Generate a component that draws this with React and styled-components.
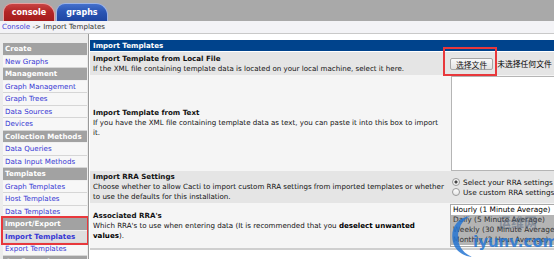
import React from 'react'
import styled, { createGlobalStyle } from 'styled-components'

const GlobalStyle = createGlobalStyle`
  html, body {
    margin: 0;
    padding: 0;
    background: #fff;
    overflow: hidden;
  }
  body {
    font-family: "DejaVu Sans", Verdana, "Noto Sans CJK SC", sans-serif;
    font-size: 7.1px;
    color: #000;
  }
`

const Page = styled.div`
  position: relative;
  width: 554px;
  height: 259px;
  overflow: hidden;
`

const TopBar = styled.div`
  height: 21px;
  background: #a9a9a9;
  display: flex;
  align-items: flex-end;
  padding-left: 3px;
  gap: 1px;
`

const Tab = styled.div`
  width: 52px;
  height: 18px;
  box-sizing: border-box;
  border-radius: 9px 12px 0 0;
  border: 1px solid ${p => (p.$red ? '#e7a0a0' : '#9db4e6')};
  border-bottom: none;
  background: ${p =>
    p.$red
      ? 'linear-gradient(#c84444, #b32626 45%, #a51d1d)'
      : 'linear-gradient(#4470cc, #2a55b4 45%, #1f46a2)'};
  color: #fff;
  font-weight: bold;
  font-size: 8px;
  display: flex;
  align-items: center;
  justify-content: center;
  padding-bottom: 1px;
`

const Crumbs = styled.div`
  height: 12px;
  line-height: 12px;
  background: #f3f3f6;
  border-bottom: 1px solid #c9c9c9;
  padding-left: 2px;
  color: #333;
  a {
    color: #3f3fd8;
    text-decoration: none;
  }
`

const Body = styled.div`
  display: flex;
  background: #ececec;
`

const Nav = styled.div`
  width: 84px;
  margin-left: 3px;
  padding-top: 9px;
  flex-shrink: 0;
`

const NavHead = styled.div`
  height: 12.5px;
  line-height: 12.5px;
  box-sizing: border-box;
  background: #a2a2a2;
  color: #fff;
  font-weight: bold;
  padding-left: 2px;
  border-bottom: 1px solid #f0f0f0;
`

const NavItem = styled.div`
  height: 12.5px;
  line-height: 12px;
  box-sizing: border-box;
  background: ${p => (p.$active ? '#dedede' : '#f7f7f7')};
  color: #3636d4;
  font-weight: ${p => (p.$active ? 'bold' : 'normal')};
  padding-left: 2px;
  border-bottom: 1px solid #d6d6d6;
`

const Marked = styled.div`
  outline: 2px solid #e8383c;
  outline-offset: 0;
`

const Main = styled.div`
  flex: 1;
  min-width: 0;
  margin-left: 1px;
  border-left: 1px solid #9a9a9a;
  background: #fff;
  padding: 6px 0 0 1px;
  height: 224px;
`

const Table = styled.div`
  width: 480px;
  border-bottom: 2px solid #cfcfcf;
`

const Header = styled.div`
  height: 11px;
  line-height: 11px;
  background: #00438c;
  color: #fff;
  font-weight: bold;
  padding-left: 3px;
  margin-bottom: 1px;
`

const Row = styled.div`
  display: grid;
  grid-template-columns: 358px 1fr;
  height: ${p => p.$h}px;
  background: ${p => (p.$dark ? '#e5e5e5' : '#f5f5f5')};
`

const Label = styled.div`
  align-self: center;
  padding-left: 3px;
  line-height: 10px;
  color: #111;
  b {
    font-weight: bold;
    color: #000;
  }
`

const Title = styled.div`
  font-weight: bold;
`

const Cell = styled.div`
  position: relative;
  display: flex;
  flex-direction: column;
  justify-content: center;
  padding-left: ${p => p.$pad || 2}px;
`

const FileRow = styled.div`
  display: flex;
  align-items: center;
  gap: 4px;
  font-family: "Noto Sans CJK SC", "DejaVu Sans", sans-serif;
  font-size: 7.8px;
  &::before {
    content: '';
    position: absolute;
    left: -5px;
    top: -5px;
    width: 50px;
    height: 25px;
    border: 2px solid #e8383c;
  }
`

const FileButton = styled.div`
  height: 12px;
  line-height: 11px;
  box-sizing: border-box;
  padding: 0 5px;
  border: 1px solid #a6a6a6;
  border-radius: 2px;
  background: linear-gradient(#fafafa, #e2e2e2);
  color: #111;
`

const TextBox = styled.div`
  height: 93px;
  margin-left: 1px;
  background: #fff;
  border: 1px solid #b5b5b5;
`

const Radio = styled.div`
  display: flex;
  align-items: center;
  gap: 3px;
  height: 10px;
  font-size: 7.3px;
  color: #111;
  &::before {
    content: '';
    width: 6px;
    height: 6px;
    border-radius: 50%;
    border: 1px solid #9a9a9a;
    background: ${p =>
      p.$on
        ? 'radial-gradient(circle, #444 0 1.3px, #f4f4f4 1.8px)'
        : 'linear-gradient(#fff, #e6e6e6)'};
  }
`

const ListBox = styled.div`
  height: 41px;
  border: 1px solid #a9a9a9;
  background: #fff;
  overflow: hidden;
`

const Option = styled.div`
  height: 10px;
  line-height: 10px;
  padding-left: 2px;
  font-size: 7.4px;
  white-space: nowrap;
  background: ${p => (p.$sel ? '#b4b4b4' : '#fff')};
  color: ${p => (p.$sel ? '#333' : '#000')};
`

const Watermark = styled.div`
  position: absolute;
  left: 448px;
  top: 210px;
  width: 106px;
  height: 49px;
  pointer-events: none;
`

const WmHan = styled.div`
  position: absolute;
  left: 50px;
  top: 4px;
  font-family: "Noto Sans CJK SC", sans-serif;
  font-weight: bold;
  font-size: 13px;
  line-height: 16px;
  color: rgba(70, 90, 120, 0.45);
`

const WmLatin = styled.div`
  position: absolute;
  left: 25px;
  top: 23px;
  font-family: "DejaVu Sans", sans-serif;
  font-weight: bold;
  font-size: 15px;
  line-height: 18px;
  color: rgba(38, 118, 210, 0.85);
`

const navTop = [
  ['h', 'Create'],
  ['i', 'New Graphs'],
  ['h', 'Management'],
  ['i', 'Graph Management'],
  ['i', 'Graph Trees'],
  ['i', 'Data Sources'],
  ['i', 'Devices'],
  ['h', 'Collection Methods'],
  ['i', 'Data Queries'],
  ['i', 'Data Input Methods'],
  ['h', 'Templates'],
  ['i', 'Graph Templates'],
  ['i', 'Host Templates'],
  ['i', 'Data Templates']
]

const renderNav = ([kind, text]) =>
  kind === 'h' ? <NavHead key={text}>{text}</NavHead> : <NavItem key={text}>{text}</NavItem>

export default function App() {
  return (
    <Page>
      <GlobalStyle />
      <TopBar>
        <Tab $red>console</Tab>
        <Tab>graphs</Tab>
      </TopBar>
      <Crumbs>
        <a href="#">Console</a> -&gt; Import Templates
      </Crumbs>
      <Body>
        <Nav>
          {navTop.map(renderNav)}
          <Marked>
            <NavHead>Import/Export</NavHead>
            <NavItem $active>Import Templates</NavItem>
          </Marked>
          <NavItem>Export Templates</NavItem>
          <NavHead>Configuration</NavHead>
        </Nav>
        <Main>
          <Table>
            <Header>Import Templates</Header>
            <Row $dark $h={23}>
              <Label>
                <Title>Import Template from Local File</Title>
                If the XML file containing template data is located on your local machine, select it here.
              </Label>
              <Cell>
                <FileRow>
                  <FileButton>选择文件</FileButton>
                  <span>未选择任何文件</span>
                </FileRow>
              </Cell>
            </Row>
            <Row $h={96}>
              <Label>
                <Title>Import Template from Text</Title>
                If you have the XML file containing template data as text, you can paste it into this box to import
                <br />
                it.
              </Label>
              <Cell $pad={2}>
                <TextBox />
              </Cell>
            </Row>
            <Row $dark $h={32}>
              <Label>
                <Title>Import RRA Settings</Title>
                Choose whether to allow Cacti to import custom RRA settings from imported templates or whether
                to use the defaults for this installation.
              </Label>
              <Cell $pad={4}>
                <Radio $on>Select your RRA settings</Radio>
                <Radio>Use custom RRA settings</Radio>
              </Cell>
            </Row>
            <Row $h={45}>
              <Label>
                <Title>Associated RRA's</Title>
                Which RRA's to use when entering data (It is recommended that you <b>deselect unwanted</b>
                <br />
                <b>values</b>).
              </Label>
              <Cell $pad={2}>
                <ListBox>
                  <Option>Hourly (1 Minute Average)</Option>
                  <Option $sel>Daily (5 Minute Average)</Option>
                  <Option $sel>Weekly (30 Minute Average)</Option>
                  <Option $sel>Monthly (2 Hour Average)</Option>
                </ListBox>
              </Cell>
            </Row>
          </Table>
        </Main>
      </Body>
      <Watermark>
        <svg width="30" height="49" viewBox="0 0 30 49">
          <path
            d="M22 6 C8 8 2 20 5 32 C7 40 14 46 24 47 C15 43 10 36 10 27 C10 17 15 10 22 6 Z"
            fill="rgba(38,118,210,0.85)"
          />
        </svg>
        <WmHan>运维网</WmHan>
        <WmLatin>iyunv.com</WmLatin>
      </Watermark>
    </Page>
  )
}
